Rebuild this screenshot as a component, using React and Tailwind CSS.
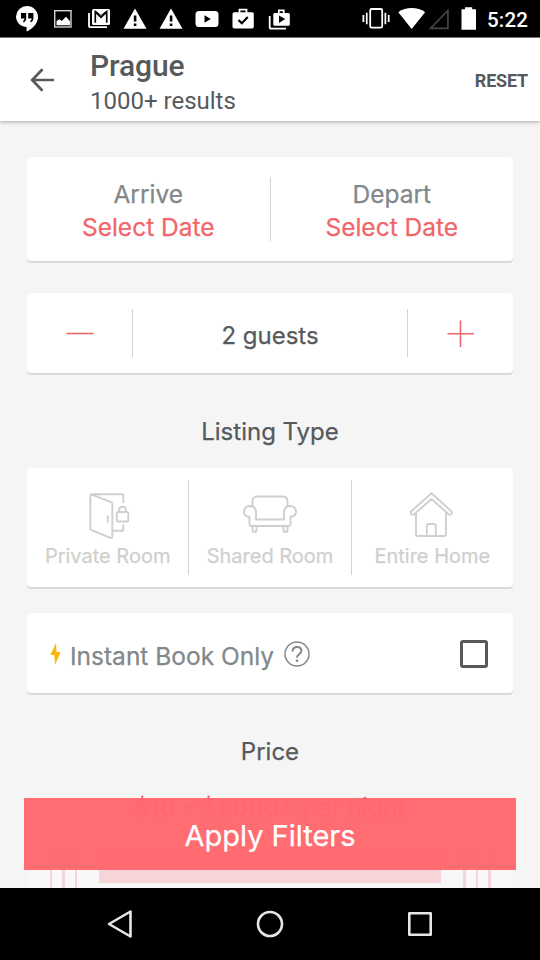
import React from "react";

const circular = "font-['Inter','Liberation_Sans',sans-serif]";

function StatusBar() {
  return (
    <div className="h-[38px] shrink-0 border-b border-[#7d7d7d] bg-black">
      <svg className="block" width="540" height="37" viewBox="0 0 540 37" fill="#fff">
        <path d="M27 6a11 11 0 0 0-11 10.600c0 5.800 4.700 10.400 10.600 10.400V31.500C32.500 29 38 23.500 38 16.800A11 11 0 0 0 27 6z" />
        <path d="M21 13h5.200v5.500c0 2-1.300 3.400-2.900 4v-2c.8-.5 1.200-1.100 1.200-2H21zM28.200 13h5.200v5.500c0 2-1.300 3.400-2.900 4v-2c.8-.5 1.200-1.100 1.200-2h-3.500z" fill="#000" />
        <rect x="54.700" y="10.700" width="16.300" height="16.300" fill="none" stroke="#d4d4d4" strokeWidth="1.400" />
        <path d="M56.500 25.300V21l3-1.700 2.300 1.700 4.200-4.300 4 4.600v4z" />
        <path d="M89 13v12.500c0 1 .6 1.700 1.700 1.700H107" fill="none" stroke="#fff" strokeWidth="1.800" />
        <rect x="92" y="9" width="18" height="16" rx="1.500" />
        <path d="M95.300 22.800V12l5.700 5.300L106.700 12v10.800" fill="none" stroke="#000" strokeWidth="1.700" />
        <path d="m95.500 11 5.500 4.500 5.500-4.500" fill="none" stroke="#000" strokeWidth="1" />
        <path d="M135 8.500 146.500 28.700h-23z" />
        <path d="M133.800 15.500h2.600v6h-2.600zM133.800 23.400h2.600v2.500h-2.600z" fill="#000" />
        <path d="M171 8.500 182.500 28.700h-23z" />
        <path d="M169.800 15.500h2.600v6h-2.600zM169.800 23.400h2.600v2.500h-2.600z" fill="#000" />
        <rect x="195.500" y="11" width="23" height="16" rx="3.500" />
        <path d="m204.500 15.300 6.300 3.700-6.300 3.700z" fill="#000" />
        <path d="M239.500 13v-3.300h7V13" fill="none" stroke="#fff" strokeWidth="1.800" />
        <rect x="232.500" y="12.300" width="21.300" height="16.300" rx="1.800" />
        <path d="m238.500 20 3.300 3.300 6-6.300" fill="none" stroke="#000" strokeWidth="2.200" />
        <path d="M269.700 16v11c0 1 .6 1.700 1.700 1.700H286" fill="none" stroke="#fff" strokeWidth="1.800" />
        <path d="M278.800 13.500v-3.200h5v3.200" fill="none" stroke="#fff" strokeWidth="1.700" />
        <rect x="273.300" y="13" width="16.500" height="12.700" rx="1.500" />
        <path d="m279 15.400 6.200 3.700-6.200 3.900z" fill="#000" />
        <rect x="370.200" y="9" width="12" height="18.700" rx="1.500" fill="none" stroke="#fff" strokeWidth="1.800" />
        <path d="M362.500 15h1.800v7h-1.800zM365.900 12.700h1.700v11.600h-1.700zM384.500 12.700h1.700v11.600h-1.700zM387.800 15h1.800v7h-1.800z" />
        <path d="M411.700 29 398.300 12.200c7.500-5.500 19.300-5.500 26.800 0z" />
        <path d="M447.900 10.500v17.900h-17.400z" fill="none" stroke="#454545" strokeWidth="1.700" />
        <path d="M465 7.300h7.200v2H476v20.400h-14.500V9.300h3.500z" />
        <text x="487" y="27" fontFamily="Roboto" fontSize="20.500" fontWeight="500" textLength="41">5:22</text>
      </svg>
    </div>
  );
}

function Header() {
  return (
    <header className="z-10 flex h-[83px] shrink-0 items-center bg-white pr-3 pl-[30px] font-['Roboto',sans-serif] text-[#565a5c] shadow-[0_1px_4px_rgba(0,0,0,0.32)]">
      <svg width="25" height="26" viewBox="0 0 25 26" fill="none" stroke="currentColor" strokeWidth="2.700">
        <path d="M24 13H2.500M12.500 2.200 2.200 13l10.300 10.800" />
      </svg>
      <div className="ml-[35px] flex-1 pt-[7px]">
        <h1 className="text-[30px] leading-[36px] font-medium tracking-[-0.1px]">Prague</h1>
        <p className="text-[24px] leading-[35px]">1000+ results</p>
      </div>
      <button className="pt-[2px] text-[18px] leading-6 font-bold tracking-[-0.2px]">RESET</button>
    </header>
  );
}

function Card({ className, children }) {
  return (
    <section className={`flex rounded-[4px] bg-white shadow-[0_2px_0_#d9dada] ${className}`}>{children}</section>
  );
}

function Divider({ className }) {
  return <div className={`w-px shrink-0 bg-[#d3d4d4] ${className}`} />;
}

function DateField({ label }) {
  return (
    <div className="flex flex-1 flex-col items-center pt-[21px] text-[24.500px] leading-[33px]">
      <span className="text-[#82888a]">{label}</span>
      <span className="text-[#f0666b]">Select Date</span>
    </div>
  );
}

function RoomType({ label, children }) {
  return (
    <div className="flex flex-1 flex-col items-center pt-[20px] text-[#cfd0ce]">
      <svg width="60" height="54" viewBox="0 0 60 54" fill="none" stroke="currentColor" strokeWidth="1.900" strokeLinejoin="round" strokeLinecap="round">
        {children}
      </svg>
      <span className="text-[20px] leading-7 whitespace-nowrap">{label}</span>
    </div>
  );
}

function Ticks() {
  return (
    <div className="flex gap-[10px]">
      <i className="h-12 w-[2.500px] bg-[#f6d5d8]" />
      <i className="h-12 w-[2.500px] bg-[#f6d5d8]" />
      <i className="h-12 w-[2.500px] bg-[#f6d5d8]" />
    </div>
  );
}

export default function App() {
  return (
    <div className={`flex h-[960px] w-[540px] flex-col overflow-hidden bg-[#f5f5f5] ${circular}`}>
      <StatusBar />
      <Header />
      <main className="relative h-[767px] shrink-0 overflow-hidden px-[27px] pt-[36px] text-[#565a5c] [-webkit-text-stroke:0.25px]">
        <Card className="h-[104px]">
          <DateField label="Arrive" />
          <Divider className="my-5" />
          <DateField label="Depart" />
        </Card>
        <Card className="mt-8 h-20">
          <button className="flex w-[105px] items-center justify-center">
            <svg width="28" height="28" fill="none" stroke="#e9686c" strokeWidth="1.600"><path d="M.5 14.500h27" /></svg>
          </button>
          <Divider className="my-4" />
          <div className="flex-1 pt-1 text-center text-[24px] leading-[78px]">2 guests</div>
          <Divider className="my-4" />
          <button className="flex w-[105px] items-center justify-center">
            <svg width="28" height="28" fill="none" stroke="#e9686c" strokeWidth="1.600"><path d="M.5 14.800h26.500M13.500 1.500v26.500" /></svg>
          </button>
        </Card>
        <h2 className="mt-[41px] text-center text-[24px] leading-9">Listing Type</h2>
        <Card className="mt-[18px] h-[119px]">
          <RoomType label="Private Room">
            <path transform="translate(1.800 -.8)" d="M12 7h30.500q1 0 1 1v7M12 7q-1.500 0-1.500 1.500v34L30 50.500q2.500.8 2.500-1.500V16.500q0-1-1.200-1.500L12 7.500M28 29v5.500M33 43.500h9.500q1 0 1-1V38" />
            <rect x="38.800" y="24" width="11.500" height="9.500" rx="1" />
            <path d="M41 24v-1.200q0-4 3.500-4t3.500 4V24" />
          </RoomType>
          <Divider className="my-3" />
          <RoomType label="Shared Room">
            <path d="M12.500 18v-4.500q0-5 5-5h25q5 0 5 5V18M16 31.500V24q-.5-6-6-6-6 .3-6 6 0 4 5.500 5v7.500q0 1.500 1.500 1.500h38q1.500 0 1.500-1.500V29q5.500-1 5.500-5 0-5.700-6-6-5.500 0-6 6v7.500zM12.500 38v4q0 2 2 2t2-2v-4M43.500 38v4q0 2 2 2t2-2v-4" />
          </RoomType>
          <Divider className="my-3" />
          <RoomType label="Entire Home">
            <path transform="translate(-1)" d="M15 24.500V46q0 2 2 2h26q2 0 2-2V24.500M30.500 5.200 10 23.500q-.8 1.500.5 2.700 1.400 1 2.700 0L30.500 11l17 15.200q1.400 1 2.700 0 1.200-1.200.3-2.700L30.500 5.200zM25.800 48V38q0-2 2-2h5q2 0 2 2v10" />
          </RoomType>
        </Card>
        <Card className="mt-[26px] h-20 items-center pt-[2px] pr-[25px] pl-[23px]">
          <svg width="11" height="22" viewBox="0 0 11 22" fill="#fdb50c"><path d="M6 0 .3 12h4L5 22l5.600-13H6.500z" /></svg>
          <span className="ml-[9px] pt-[3px] text-[24.500px] leading-[30px] text-[#82888a]">Instant Book Only</span>
          <svg className="ml-[10px]" width="26" height="26" viewBox="0 0 26 26" fill="none" stroke="#82888a" strokeWidth="1.500">
            <circle cx="13" cy="13" r="12" />
            <path d="M8.600 10.500q0-4.500 4.400-4.500t4.400 3.800q0 2-2.200 3.400T13 16.800" strokeWidth="2" />
            <path d="M13 18.500v2.300" strokeWidth="2.400" />
          </svg>
          <div className="ml-auto size-[28px] rounded-[3px] border-[3px] border-[#565a5c]" />
        </Card>
        <h2 className="mt-[41px] text-center text-[24px] leading-9">Price</h2>
        <p className="mt-[19px] text-center text-[24.500px] leading-9 text-[#ef5b62]">$10 - $1,000+ per night</p>
        <div className="mt-[26px] flex h-12 justify-between bg-[#f8f8f8] px-[22.500px]">
          <Ticks />
          <div className="h-[32px] w-[342px] bg-[#f6d5d8]" />
          <Ticks />
        </div>
        <button className="absolute top-[677px] left-6 h-[72px] w-[492px] bg-[#ff686e]/97 pt-1 text-[29px] leading-9 text-white">
          Apply Filters
        </button>
      </main>
      <nav className="flex h-[72px] shrink-0 items-center justify-center bg-black">
        <svg width="540" height="72" viewBox="0 0 540 72" fill="none" stroke="#e6e6e6" strokeWidth="2.600" strokeLinejoin="round">
          <path d="M130.500 23.500v25L109 36z" />
          <circle cx="270" cy="36" r="12" />
          <rect x="409.300" y="25.300" width="21.400" height="21.400" />
        </svg>
      </nav>
    </div>
  );
}
